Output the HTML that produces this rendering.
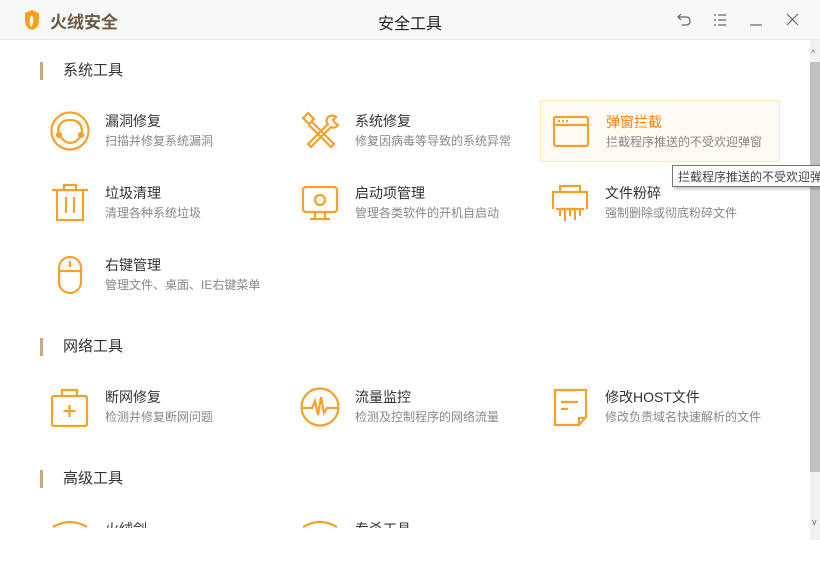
<!DOCTYPE html>
<html><head><meta charset="utf-8"><style>
*{margin:0;padding:0;box-sizing:border-box}
body{width:820px;height:540px;overflow:hidden;background:#fff;font-family:"Liberation Sans","Noto Sans CJK SC",sans-serif;position:relative}
.top{position:absolute;left:0;top:0;width:820px;height:40px;background:#f7f8f8;border-bottom:1px solid #e8e8e8}
.logo{position:absolute;left:50px;top:8px;font-size:17px;font-weight:bold;color:#6b5a45}
.ttl{position:absolute;left:0;width:820px;top:10px;text-align:center;font-size:16px;color:#222}
.ctl{position:absolute;top:8px;font-size:16px;color:#666}
.sec{position:absolute;left:40px;font-size:15px;color:#333;padding-left:23px;height:18px;line-height:18px}
.sec:before{content:"";position:absolute;left:0;top:0;width:3px;height:18px;background:#c8a880}
.it{position:absolute;width:240px;height:62px}
.it svg{position:absolute;left:10px;top:11px}
.it b{position:absolute;left:65px;top:11px;font-weight:normal;font-size:14px;color:#333;white-space:nowrap}
.it i{position:absolute;left:65px;top:32px;font-style:normal;font-size:12px;color:#888;white-space:nowrap}
.hl{background:#fffaf2;border:1px solid #fde6c4}
.hl b{color:#f5820f}
svg *{fill:none;stroke:#f8a128;stroke-width:2.2}
</style></head><body>
<div class="top">
<svg style="position:absolute;left:23px;top:9px" width="18" height="22" viewBox="0 0 18 22"><path d="M2 4 L9 1 L16 4 L16 12 Q16 19 9 21 Q2 19 2 12Z" style="fill:#f7a21b;stroke:none"/><path d="M9 6 Q5 11 8 18 Q12 13 9 6Z" style="fill:#fff;stroke:none"/></svg>
<div class="logo">火绒安全</div>
<div class="ttl">安全工具</div>
<svg class="ctl" style="left:677px;top:13px" width="14" height="14" viewBox="0 0 14 14"><path d="M4 1 L1 4 L4 7 M1 4 H9 Q13 4 13 8 Q13 12 9 12 H5" style="stroke:#666;stroke-width:1.2"/></svg>
<svg class="ctl" style="left:713px;top:14px" width="14" height="12" viewBox="0 0 14 12"><path d="M1 1H3M5 1H13M1 6H3M5 6H13M1 11H3M5 11H13" style="stroke:#666;stroke-width:1.2"/></svg>
<svg class="ctl" style="left:749px;top:12px" width="14" height="14"><path d="M1 13H13" style="stroke:#666;stroke-width:1.2"/></svg>
<svg class="ctl" style="left:786px;top:13px" width="13" height="13"><path d="M1 1L12 12M12 1L1 12" style="stroke:#666;stroke-width:1.2"/></svg>
</div>
<div style="position:absolute;left:810px;top:40px;width:10px;height:500px;background:#f2f2f2"></div>
<div style="position:absolute;left:810px;top:62px;width:10px;height:410px;background:#c2c2c2"></div>
<div style="position:absolute;left:811px;top:48px;font-size:9px;color:#666">^</div>

<div class="sec" style="top:62px">系统工具</div>
<div class="sec" style="top:338px">网络工具</div>
<div class="sec" style="top:470px">高级工具</div>

<div class="it" style="left:40px;top:100px"><svg width="40" height="40"><circle cx="20" cy="20" r="18.5"/><path d="M8 21 Q8 9 20 9 Q32 9 32 21 M11 26 Q15 32 20 32 Q26 32 30 26"/><circle cx="9" cy="24" r="2" style="fill:#f8a128"/><circle cx="31" cy="24" r="2" style="fill:#f8a128"/></svg><b>漏洞修复</b><i>扫描并修复系统漏洞</i></div>
<div class="it" style="left:290px;top:100px"><svg width="40" height="40"><path d="M3 7 L8 2 L14 8 L9 13Z M12 11 L34 33 L31 36 L9 14 M36 6 Q32 3 28 6 Q25 10 28 13 L8 33 L11 36 L31 16 Q35 18 38 14 L35 12 L33 9 Z"/></svg><b>系统修复</b><i>修复因病毒等导致的系统异常</i></div>
<div class="it hl" style="left:540px;top:100px"><svg width="40" height="40"><rect x="3" y="5" width="34" height="29" rx="2"/><path d="M3 13H37 M7 9H9M11 9H13M15 9H17"/></svg><b>弹窗拦截</b><i>拦截程序推送的不受欢迎弹窗</i></div>

<div class="it" style="left:40px;top:172px"><svg width="40" height="40"><path d="M2 7H38 M14 7V2H26V7 M7 7V37H33V7 M16 14V30 M24 14V30"/></svg><b>垃圾清理</b><i>清理各种系统垃圾</i></div>
<div class="it" style="left:290px;top:172px"><svg width="40" height="40"><rect x="3" y="4" width="34" height="25" rx="3"/><path d="M15 29V35 M25 29V35 M10 36H30"/><circle cx="20" cy="17" r="5"/></svg><b>启动项管理</b><i>管理各类软件的开机自启动</i></div>
<div class="it" style="left:540px;top:172px"><svg width="40" height="40"><path d="M10 9V3H30V9 M3 26V9H37V26 M6 26H34 M10 26V33 M15 26V38 M20 26V33 M25 26V37 M30 26V33"/></svg><b>文件粉碎</b><i>强制删除或彻底粉碎文件</i></div>

<div class="it" style="left:40px;top:244px"><svg width="40" height="40"><rect x="9" y="2" width="22" height="36" rx="11"/><path d="M9 16H31 M20 6V12"/></svg><b>右键管理</b><i>管理文件、桌面、IE右键菜单</i></div>

<div class="it" style="left:40px;top:376px"><svg width="40" height="40"><rect x="2" y="9" width="35" height="30" rx="2"/><path d="M12 9V3H27V9 M19.5 18V30 M13.5 24H25.5"/></svg><b>断网修复</b><i>检测并修复断网问题</i></div>
<div class="it" style="left:290px;top:376px"><svg width="40" height="40"><circle cx="20" cy="20" r="18.5"/><path d="M2 21H12L15 14L18 28L21 10L24 26L27 21H38"/></svg><b>流量监控</b><i>检测及控制程序的网络流量</i></div>
<div class="it" style="left:540px;top:376px"><svg width="40" height="40"><path d="M5 3H36V30L29 38H5Z M29 38V31H36 M11 15H28 M11 22H18"/></svg><b>修改HOST文件</b><i>修改负责域名快速解析的文件</i></div>

<div class="it" style="left:40px;top:508px"><svg width="40" height="40"><path d="M3 8 Q20 -2 37 8"/></svg><b>火绒剑</b></div>
<div class="it" style="left:290px;top:508px"><svg width="40" height="40"><path d="M3 8 Q20 -2 37 8"/></svg><b>专杀工具</b></div>
<div style="position:absolute;left:0;top:528px;width:810px;height:12px;background:#fff"></div>
<div style="position:absolute;left:812px;top:517px;font-size:9px;color:#666">v</div>

<div style="position:absolute;left:672px;top:165px;width:160px;height:22px;background:#fff;border:1px solid #767676;box-shadow:2px 2px 3px rgba(0,0,0,.25);font-size:12px;color:#444;padding:2px 0 0 5px;white-space:nowrap">拦截程序推送的不受欢迎弹窗</div>
</body></html>
